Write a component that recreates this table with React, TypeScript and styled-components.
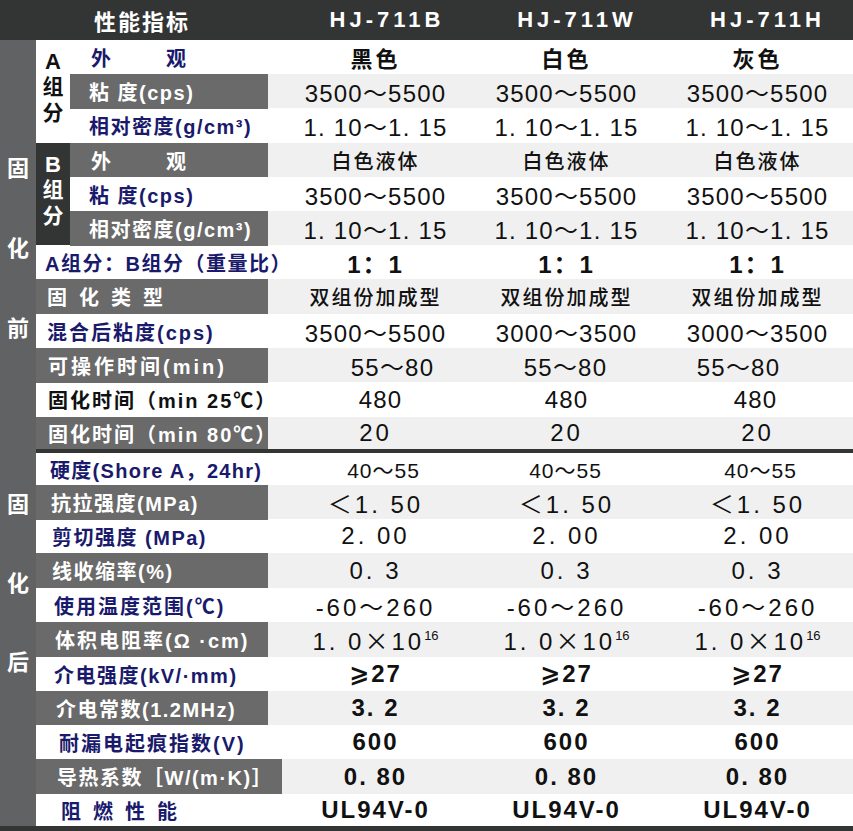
import React from 'react';
import styled, { createGlobalStyle } from 'styled-components';

const GlobalStyle = createGlobalStyle`
  html, body { margin: 0; padding: 0; background: #fff; overflow: hidden; }
  #root { width: 853px; height: 831px; }
`;

const SANS = `"Liberation Sans", "Noto Sans CJK SC", "DejaVu Sans", sans-serif`;
const CJK = `"Noto Sans CJK SC", "Liberation Sans", sans-serif`;

const C = {
  dark: '#333535',
  strip: '#606264',
  label: '#6a6a6a',
  light: '#f0f0f0',
  navy: '#1a1a6c',
};

const Sheet = styled.div`
  width: 853px;
  height: 831px;
  display: flex;
  flex-direction: column;
  background: #fff;
  overflow: hidden;
`;

const Header = styled.div`
  flex: 0 0 40px;
  display: grid;
  grid-template-columns: 292px 190px 190px 1fr;
  align-items: center;
  background: ${C.dark};
  color: #fff;
`;

const HeaderTitle = styled.div`
  font: 700 22px ${CJK};
  letter-spacing: 2px;
  text-align: center;
  padding-right: 8px;
`;

const HeaderModel = styled.div<{ $shift?: number }>`
  font: 700 22px ${SANS};
  letter-spacing: 4px;
  text-align: center;
  padding-left: ${(p) => p.$shift ?? 0}px;
`;

const Section = styled.div`
  display: flex;
`;

const Strip = styled.div<{ $top: number; $gap: number }>`
  flex: 0 0 36px;
  box-sizing: border-box;
  background: ${C.strip};
  display: flex;
  flex-direction: column;
  align-items: center;
  padding-top: ${(p) => p.$top}px;
  gap: ${(p) => p.$gap}px;
  color: #fff;
  font: 700 22px/22px ${CJK};
`;

const Body = styled.div<{ $rule?: boolean }>`
  flex: 1;
  display: flex;
  flex-direction: column;
  border-top: ${(p) => (p.$rule ? `4px solid ${C.dark}` : 'none')};
`;

const Group = styled.div`
  display: flex;
`;

const GroupCell = styled.div<{ $dark: boolean }>`
  flex: 0 0 34px;
  display: flex;
  flex-direction: column;
  align-items: center;
  justify-content: center;
  gap: 3px;
  padding-bottom: 4px;
  box-sizing: border-box;
  background: ${(p) => (p.$dark ? C.dark : '#fff')};
  color: ${(p) => (p.$dark ? '#fff' : '#111')};
`;

const GroupLetter = styled.span`
  font: 700 22px/22px ${SANS};
`;

const GroupWord = styled.span`
  writing-mode: vertical-rl;
  text-orientation: upright;
  font: 700 21px/24px ${CJK};
  letter-spacing: 5px;
`;

const GroupRows = styled.div`
  flex: 1;
  display: flex;
  flex-direction: column;
`;

const Row = styled.div<{ $h: number; $shade: boolean; $labelW: number }>`
  height: ${(p) => p.$h}px;
  display: grid;
  grid-template-columns: ${(p) => p.$labelW}px 12px 191px 191px 1fr;
  align-items: stretch;
  background: ${(p) => (p.$shade ? C.light : '#fff')};
`;

type Ink = 'navy' | 'white' | 'black';

const Label = styled.div<{ $shade: boolean; $ink: Ink; $pad: number; $ls: number; $extend: number }>`
  grid-column: 1;
  position: relative;
  z-index: 1;
  display: flex;
  align-items: center;
  padding-left: ${(p) => p.$pad}px;
  margin-right: ${(p) => -p.$extend}px;
  background: ${(p) => (p.$shade ? C.label : 'transparent')};
  color: ${(p) => (p.$ink === 'navy' ? C.navy : p.$ink === 'white' ? '#fff' : '#111')};
  font: 700 20px ${SANS};
  letter-spacing: ${(p) => p.$ls}px;
  white-space: nowrap;
`;

type VStyle = { size: number; weight: number; ls: number; cjk?: boolean };

const Value = styled.div<{ $col: number; $v: VStyle; $dx: number }>`
  grid-column: ${(p) => p.$col};
  display: flex;
  align-items: center;
  justify-content: center;
  color: #111;
  font-family: ${(p) => (p.$v.cjk ? CJK : SANS)};
  font-size: ${(p) => p.$v.size}px;
  font-weight: ${(p) => p.$v.weight};
  letter-spacing: ${(p) => p.$v.ls}px;
  white-space: nowrap;
  transform: translateX(${(p) => p.$dx}px);
`;

const ValueText = styled.span`
  display: inline-block;
`;

const Sup = styled.sup`
  font-size: 13px;
  letter-spacing: 0;
  vertical-align: 10px;
  line-height: 0;
`;

const Cross = styled.span`
  font-family: ${CJK};
  font-weight: 400;
  font-size: 24px;
`;

const Footer = styled.div`
  flex: 0 0 5px;
  background: ${C.dark};
`;

const V = {
  num: { size: 24, weight: 400, ls: 1.2 },
  numWide: { size: 24, weight: 400, ls: 3 },
  numB: { size: 24, weight: 700, ls: 2 },
  small: { size: 21, weight: 400, ls: 1 },
  cjk: { size: 20, weight: 500, ls: 2, cjk: true },
  cjkB: { size: 22, weight: 700, ls: 3, cjk: true },
};

type RowDef = {
  label: React.ReactNode;
  shade: boolean;
  ink: Ink;
  pad: number;
  ls?: number;
  h: number;
  extend?: number;
  values: React.ReactNode[];
  dx?: number[];
  v: VStyle;
};

const power = (
  <>
    1. 0<Cross>×</Cross>10<Sup>16</Sup>
  </>
);

const groupA: RowDef[] = [
  { label: '外　　观', shade: false, ink: 'navy', pad: 21, ls: 5, h: 34, values: ['黑色', '白色', '灰色'], v: V.cjkB },
  { label: '粘 度(cps)', shade: true, ink: 'white', pad: 19, ls: 1.5, h: 34, values: ['3500～5500', '3500～5500', '3500～5500'], v: V.num },
  { label: '相对密度(g/cm³)', shade: false, ink: 'navy', pad: 19, ls: 1.5, h: 35, values: ['1. 10～1. 15', '1. 10～1. 15', '1. 10～1. 15'], v: V.num },
];

const groupB: RowDef[] = [
  { label: '外　　观', shade: true, ink: 'white', pad: 21, ls: 5, h: 34, values: ['白色液体', '白色液体', '白色液体'], v: V.cjk },
  { label: '粘 度(cps)', shade: false, ink: 'navy', pad: 19, ls: 1.5, h: 34, values: ['3500～5500', '3500～5500', '3500～5500'], v: V.num },
  { label: '相对密度(g/cm³)', shade: true, ink: 'white', pad: 19, ls: 1.5, h: 34, values: ['1. 10～1. 15', '1. 10～1. 15', '1. 10～1. 15'], v: V.num },
];

const beforeRest: RowDef[] = [
  { label: 'A组分：B组分（重量比）', shade: false, ink: 'navy', pad: 9, ls: 1.5, h: 34, values: ['1：1', '1：1', '1：1'], v: V.numB },
  { label: '固化类型', shade: true, ink: 'white', pad: 11, ls: 12, h: 35, values: ['双组份加成型', '双组份加成型', '双组份加成型'], v: V.cjk },
  { label: '混合后粘度(cps)', shade: false, ink: 'navy', pad: 11, ls: 2, h: 34, values: ['3500～5500', '3000～3500', '3000～3500'], v: V.num },
  { label: '可操作时间(min)', shade: true, ink: 'white', pad: 12, ls: 3, h: 34, values: ['55～80', '55～80', '55～80'], dx: [17, -1, -19], v: V.num },
  { label: '固化时间（min  25℃）', shade: false, ink: 'black', pad: 12, ls: 2, h: 35, values: ['480', '480', '480'], dx: [5, 0, -2], v: V.num },
  { label: '固化时间（min  80℃）', shade: true, ink: 'white', pad: 12, ls: 2, h: 32, values: ['20', '20', '20'], v: V.numWide },
];

const after: RowDef[] = [
  { label: '硬度(Shore A，24hr)', shade: false, ink: 'navy', pad: 14, ls: 1.3, h: 32, values: ['40～55', '40～55', '40～55'], dx: [8, -1, 3], v: V.small },
  { label: '抗拉强度(MPa)', shade: true, ink: 'white', pad: 15, ls: 1.5, h: 34, values: ['＜1. 50', '＜1. 50', '＜1. 50'], v: V.numWide },
  { label: '剪切强度 (MPa)', shade: false, ink: 'navy', pad: 16, ls: 1.5, h: 34, values: ['2. 00', '2. 00', '2. 00'], v: V.numWide },
  { label: '线收缩率(%)', shade: true, ink: 'white', pad: 16, ls: 1.5, h: 35, values: ['0. 3', '0. 3', '0. 3'], v: V.numWide },
  { label: '使用温度范围(℃)', shade: false, ink: 'navy', pad: 18, ls: 2, h: 34, values: ['-60～260', '-60～260', '-60～260'], v: V.numWide },
  { label: '体积电阻率(Ω ·cm)', shade: true, ink: 'white', pad: 19, ls: 2, h: 35, values: [power, power, power], v: V.numWide },
  { label: '介电强度(kV/·mm)', shade: false, ink: 'navy', pad: 18, ls: 1.5, h: 34, values: ['⩾27', '⩾27', '⩾27'], v: V.numB },
  { label: '介电常数(1.2MHz)', shade: true, ink: 'white', pad: 20, ls: 1.5, h: 34, values: ['3. 2', '3. 2', '3. 2'], v: V.numB },
  { label: '耐漏电起痕指数(V)', shade: false, ink: 'navy', pad: 23, ls: 2, h: 34, values: ['600', '600', '600'], v: V.numB },
  { label: '导热系数［W/(m·K)］', shade: true, ink: 'white', pad: 21, ls: 1.5, h: 35, extend: 14, values: ['0. 80', '0. 80', '0. 80'], v: V.numB },
  { label: '阻燃性能', shade: false, ink: 'navy', pad: 25, ls: 12, h: 32, values: ['UL94V-0', 'UL94V-0', 'UL94V-0'], v: V.numB },
];

function DataRow({ def, labelW }: { def: RowDef; labelW: number }) {
  return (
    <Row $h={def.h} $shade={def.shade} $labelW={labelW}>
      <Label
        $shade={def.shade}
        $ink={def.ink}
        $pad={def.pad}
        $ls={def.ls ?? 1.5}
        $extend={def.extend ?? 0}
      >
        {def.label}
      </Label>
      {def.values.map((val, i) => (
        <Value key={i} $col={i + 3} $v={def.v} $dx={def.dx ? def.dx[i] : 0}>
          <ValueText>{val}</ValueText>
        </Value>
      ))}
    </Row>
  );
}

export default function App() {
  return (
    <>
      <GlobalStyle />
      <Sheet>
        <Header>
          <HeaderTitle>性能指标</HeaderTitle>
          <HeaderModel>HJ-711B</HeaderModel>
          <HeaderModel>HJ-711W</HeaderModel>
          <HeaderModel $shift={10}>HJ-711H</HeaderModel>
        </Header>

        <Section>
          <Strip $top={115} $gap={58}>
            <span>固</span>
            <span>化</span>
            <span>前</span>
          </Strip>
          <Body>
            <Group>
              <GroupCell $dark={false}>
                <GroupLetter>A</GroupLetter>
                <GroupWord>组分</GroupWord>
              </GroupCell>
              <GroupRows>
                {groupA.map((d, i) => (
                  <DataRow key={i} def={d} labelW={198} />
                ))}
              </GroupRows>
            </Group>
            <Group>
              <GroupCell $dark>
                <GroupLetter>B</GroupLetter>
                <GroupWord>组分</GroupWord>
              </GroupCell>
              <GroupRows>
                {groupB.map((d, i) => (
                  <DataRow key={i} def={d} labelW={198} />
                ))}
              </GroupRows>
            </Group>
            {beforeRest.map((d, i) => (
              <DataRow key={i} def={d} labelW={232} />
            ))}
          </Body>
        </Section>

        <Section>
          <Strip $top={42} $gap={57}>
            <span>固</span>
            <span>化</span>
            <span>后</span>
          </Strip>
          <Body $rule>
            {after.map((d, i) => (
              <DataRow key={i} def={d} labelW={232} />
            ))}
          </Body>
        </Section>

        <Footer />
      </Sheet>
    </>
  );
}
